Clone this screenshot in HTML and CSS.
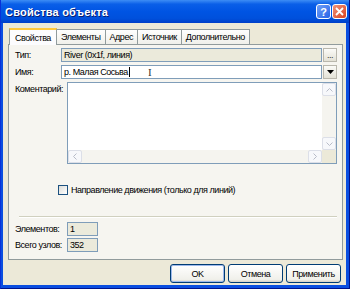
FILE: index.html
```html
<!DOCTYPE html>
<html lang="ru">
<head>
    <meta charset="UTF-8">
    <title>Свойства объекта</title>
    <link rel="stylesheet" href="styles.css">
</head>
<body>
    <!-- Dialog window -->
    <div class="window">
        <div class="titlebar">
            <span class="title">Свойства объекта</span>
            <div class="title-buttons">
                <div class="tbtn help">?</div>
                <div class="tbtn close">
                    <svg width="9" height="9" viewBox="0 0 9 9"><path d="M1 1L8 8M8 1L1 8" stroke="#fff" stroke-width="1.8"/></svg>
                </div>
            </div>
        </div>

        <div class="client">
            <!-- Tabs -->
            <div class="tabs">
                <div class="tab active">Свойства</div>
                <div class="tab">Элементы</div>
                <div class="tab">Адрес</div>
                <div class="tab">Источник</div>
                <div class="tab">Дополнительно</div>
            </div>

            <div class="panel">
                <div class="row">
                    <span class="label">Тип:</span>
                    <div class="field readonly">River (0x1f, линия)</div>
                    <div class="side-btn">...</div>
                </div>
                <div class="row">
                    <span class="label">Имя:</span>
                    <div class="field">р. Малая Сосьва<span class="caret"></span><span class="ibeam">I</span></div>
                    <div class="side-btn">
                        <svg width="7" height="4" viewBox="0 0 7 4"><path d="M0 0H7L3.5 4Z" fill="#000"/></svg>
                    </div>
                </div>
                <div class="row comment-row">
                    <span class="label">Коментарий:</span>
                    <div class="memo">
                        <div class="memo-main">
                            <div class="memo-text"></div>
                            <div class="vscroll">
                                <div class="sbtn">
                                    <svg width="7" height="4" viewBox="0 0 7 4"><path d="M0.5 3.5L3.5 0.5L6.5 3.5" stroke="#b8bcc8" fill="none"/></svg>
                                </div>
                                <div class="sbtn">
                                    <svg width="7" height="4" viewBox="0 0 7 4"><path d="M0.5 0.5L3.5 3.5L6.5 0.5" stroke="#b8bcc8" fill="none"/></svg>
                                </div>
                            </div>
                        </div>
                        <div class="hscroll">
                            <div class="sbtn">
                                <svg width="4" height="7" viewBox="0 0 4 7"><path d="M3.5 0.5L0.5 3.5L3.5 6.5" stroke="#b8bcc8" fill="none"/></svg>
                            </div>
                            <div class="sbtn">
                                <svg width="4" height="7" viewBox="0 0 4 7"><path d="M0.5 0.5L3.5 3.5L0.5 6.5" stroke="#b8bcc8" fill="none"/></svg>
                            </div>
                            <div class="corner"></div>
                        </div>
                    </div>
                </div>
                <div class="check-row">
                    <span class="checkbox"></span>
                    <span>Направление движения (только для линий)</span>
                </div>
                <div class="separator"></div>
                <div class="stat">
                    <span class="stat-label">Элементов:</span>
                    <div class="stat-box">1</div>
                </div>
                <div class="stat">
                    <span class="stat-label">Всего узлов:</span>
                    <div class="stat-box">352</div>
                </div>
            </div>

            <!-- Dialog buttons -->
            <div class="buttons">
                <div class="btn default">OK</div>
                <div class="btn">Отмена</div>
                <div class="btn">Применить</div>
            </div>
        </div>
    </div>
</body>
</html>
```

FILE: styles.css
```css
/* Reset */
* {
    margin: 0;
    padding: 0;
    box-sizing: border-box;
}

body {
    font-family: 'Liberation Sans', Arial, sans-serif;
    font-size: 9px;
    letter-spacing: -0.45px;
    color: #000;
    background: #fff;
    white-space: nowrap;
}

/* Window frame */
.window {
    width: 350px;
    height: 289px;
    display: flex;
    flex-direction: column;
    background: #0a4ee0;
    border-left: 1px solid #0831d9;
    border-right: 1px solid #00138c;
    border-bottom: 1px solid #00138c;
}

.titlebar {
    height: 23px;
    display: flex;
    align-items: center;
    justify-content: space-between;
    padding: 0 2px 0 4px;
    background: linear-gradient(to bottom, #3d8df5 0%, #0a5fe8 18%, #0054e3 50%, #0050dc 80%, #003fc8 100%);
}

.title {
    color: #fff;
    font-weight: bold;
    font-size: 11px;
    text-shadow: 1px 1px 0 #0a1e6e;
    letter-spacing: 0.2px;
}

.title-buttons {
    display: flex;
    gap: 1px;
}

.tbtn {
    width: 15px;
    height: 15px;
    border: 1px solid #fff;
    border-radius: 3px;
    display: flex;
    align-items: center;
    justify-content: center;
    color: #fff;
    font-weight: bold;
    font-size: 11px;
    letter-spacing: 0;
}

.help {
    background: linear-gradient(135deg, #6f9ff6, #2763e8);
}

.close {
    background: linear-gradient(135deg, #f0937a, #d9431e);
}

.client {
    flex: 1;
    margin: 0 3px 3px 2px;
    background: #ece9d8;
    display: flex;
    flex-direction: column;
}

/* Tabs */
.tabs {
    display: flex;
    align-items: flex-end;
    padding-left: 6px;
    margin-top: 4px;
    height: 17px;
}

.tab {
    height: 15px;
    padding: 0 4px 0 4px;
    line-height: 14px;
    background: linear-gradient(to bottom, #fefefe, #f0f0ea);
    border: 1px solid #919b9c;
    border-bottom: none;
    border-left: none;
}

.tab.active {
    height: 17px;
    padding: 0 5px 0 5px;
    line-height: 17px;
    border-left: 1px solid #919b9c;
    border-top: 2px solid #ffc83c;
    background: #fcfcfe;
    margin-bottom: -1px;
    position: relative;
    z-index: 1;
}

/* Tab panel */
.panel {
    margin: 0 3px 0 5px;
    height: 216px;
    border: 1px solid #919b9c;
    background: #f6f5f0;
    padding: 3px 5px 0 6px;
}

.row {
    display: flex;
    align-items: center;
    height: 14px;
    margin-bottom: 3px;
}

.label {
    width: 46px;
}

.field {
    flex: 1;
    height: 14px;
    border: 1px solid #7f9db9;
    background: #fff;
    line-height: 12px;
    padding-left: 2px;
    display: flex;
    align-items: center;
}

.field.readonly {
    background: #ebeadb;
}

.caret {
    width: 1px;
    height: 10px;
    background: #000;
    margin-left: 1px;
}

.ibeam {
    margin-left: 18px;
    font-family: 'Liberation Serif', serif;
    font-size: 11px;
    color: #333;
}

.side-btn {
    width: 14px;
    height: 14px;
    margin-left: 1px;
    border: 1px solid #b9b7ad;
    background: linear-gradient(to bottom, #fbfbf8, #e3e1d6);
    display: flex;
    align-items: center;
    justify-content: center;
    font-size: 9px;
    line-height: 8px;
    color: #333;
}

.comment-row {
    align-items: flex-start;
    height: 82px;
}

.comment-row .label {
    width: 52px;
    padding-top: 2px;
}

.memo {
    flex: 1;
    height: 82px;
    border: 1px solid #7f9db9;
    background: #fff;
    display: flex;
    flex-direction: column;
}

.memo-main {
    flex: 1;
    display: flex;
}

.memo-text {
    flex: 1;
}

.vscroll {
    width: 14px;
    display: flex;
    flex-direction: column;
    justify-content: space-between;
    background: #f5f4ef;
}

.hscroll {
    height: 13px;
    display: flex;
    background: #f5f4ef;
}

.hscroll .sbtn:nth-child(2) {
    margin-left: auto;
}

.sbtn {
    width: 14px;
    height: 13px;
    border: 1px solid #dcdfe8;
    border-radius: 2px;
    background: #f7f8fb;
    display: flex;
    align-items: center;
    justify-content: center;
}

.corner {
    width: 14px;
    background: #ece9d8;
}

.check-row {
    display: flex;
    align-items: center;
    margin: 21px 0 0 43px;
    gap: 3px;
}

.checkbox {
    width: 10px;
    height: 10px;
    border: 1px solid #1c5180;
    background: linear-gradient(135deg, #dcdcd7, #ffffff);
}

.separator {
    margin: 21px 0 4px 4px;
    border-top: 1px solid #d0d0bf;
    border-bottom: 1px solid #fff;
}

.stat {
    display: flex;
    align-items: center;
    height: 14px;
    margin-bottom: 2px;
}

.stat-label {
    width: 52px;
}

.stat-box {
    width: 31px;
    height: 14px;
    border: 1px solid #7f9db9;
    background: #ebeadb;
    padding-left: 2px;
    line-height: 12px;
}

/* Dialog buttons */
.buttons {
    display: flex;
    justify-content: flex-end;
    gap: 3px;
    padding: 4px 5px 0 0;
}

.btn {
    width: 55px;
    height: 19px;
    border: 1px solid #003c74;
    border-radius: 3px;
    background: linear-gradient(to bottom, #ffffff, #f0f0ea 85%, #d6d0c5);
    display: flex;
    align-items: center;
    justify-content: center;
}

.btn.default {
    box-shadow: inset 0 0 0 1px #9db9eb;
}
```
